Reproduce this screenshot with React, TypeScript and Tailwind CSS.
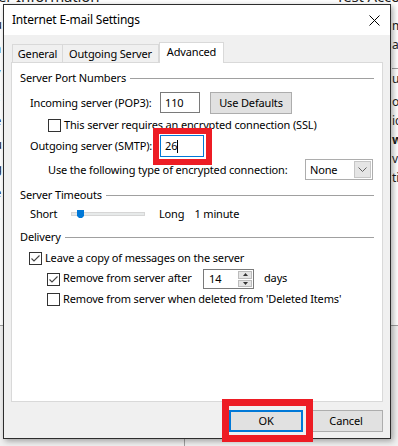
import React from "react";

const Checkbox = ({ checked = false }: { checked?: boolean }) => (
  <div className="w-[13px] h-[13px] shrink-0 border border-[#333333] bg-white flex items-center justify-center">
    {checked && (
      <svg width="11" height="11" viewBox="0 0 11 11">
        <polyline points="1.5,5.5 4,8 9.5,2.5" fill="none" stroke="#444444" strokeWidth="1.1" />
      </svg>
    )}
  </div>
);

const GroupLabel = ({ label }: { label: string }) => (
  <div className="flex items-center gap-[4px] h-[16px]">
    <span>{label}</span>
    <div className="flex-1 h-px bg-[#a0a0a0]" />
  </div>
);

const Button = ({ label, width }: { label: string; width: string }) => (
  <div className={`${width} h-[22px] bg-[#e1e1e1] border border-[#adadad] flex items-center justify-center`}>
    {label}
  </div>
);

export default function App() {
  return (
    <div className="relative w-[398px] h-[446px] overflow-hidden whitespace-nowrap bg-[#f0f0f0] text-[11px] leading-[16px] tracking-[-0.15px] text-black font-['Noto_Sans',sans-serif]">
      {/* window behind the dialog */}
      <div className="absolute inset-0 bg-white">
        <span className="absolute left-[-2px] top-[-12px] text-[15px] text-[#1e1e1e]">er Information</span>
        <span className="absolute left-[336px] top-[-12px] text-[15px] text-[#1e1e1e]">Test Account</span>
        <div className="absolute left-0 top-[16px] flex flex-col gap-[8px] text-[13px] text-[#1e1e1e]">
          <span className="ml-[-6px]">u</span>
          <span className="ml-[-6px]">a</span>
          <span className="ml-[-6px] text-[#2b4f9a]">v</span>
          <span className="ml-[-6px] text-[#2b4f9a]">c</span>
          <span className="ml-[-6px]">e</span>
          <span className="ml-[-6px]">u</span>
          <span className="ml-[-6px] underline">g</span>
          <span className="ml-[-6px]">e</span>
          <span className="ml-[-6px]">s</span>
        </div>
        <div className="absolute left-[392px] top-[18px] flex flex-col gap-[3px] text-[12px] text-[#1e1e1e]">
          <span>m</span>
          <span>a</span>
          <span className="mt-[12px] border-t border-[#a0a0a0] pt-[2px]">u</span>
          <span className="mt-[4px]">o</span>
          <span>ic</span>
          <span className="font-bold">w</span>
          <span>v</span>
          <span>ti</span>
        </div>
        <div className="absolute left-0 top-[325px] w-[398px] h-[121px] bg-[#f0f0f0] border-t border-[#a0a0a0]" />
        <div className="absolute left-[184px] top-[325px] w-px h-[121px] bg-[#a0a0a0]" />
      </div>

      {/* dialog */}
      <div className="relative z-10 ml-[3px] mt-[4px] w-[388px] h-[435px] border border-[#2d2d2d] bg-[#f0f0f0] flex flex-col shadow-[2px_2px_6px_rgba(0,0,0,0.35)]">
        <div className="h-[30px] bg-white flex items-center justify-between pl-[8px] pr-[10px]">
          <span className="text-[12px] tracking-[-0.2px]">Internet E-mail Settings</span>
          <svg width="11" height="11" viewBox="0 0 11 11">
            <path d="M0.5 0.5 L10.5 10.5 M10.5 0.5 L0.5 10.5" stroke="#000" strokeWidth="1" />
          </svg>
        </div>

        <div className="px-[7px] pt-[7px] flex flex-col">
          <div className="flex items-end h-[20px] pl-[1px]">
            <div className="w-[51px] h-[18px] border border-b-0 border-[#d9d9d9] flex items-center justify-center">General</div>
            <div className="w-[96px] h-[18px] border border-b-0 border-l-0 border-[#d9d9d9] flex items-center justify-center">Outgoing Server</div>
            <div className="relative z-10 -mb-px w-[65px] h-[21px] bg-white border border-b-0 border-[#d9d9d9] flex items-start justify-center pt-[1px]">Advanced</div>
          </div>

          <div className="h-[340px] bg-white border border-[#d9d9d9] pl-[8px] pr-[8px] flex flex-col">
            <div className="mt-[7px]">
              <GroupLabel label="Server Port Numbers" />
            </div>

            <div className="mt-[6px] h-[21px] flex items-center pl-[10px]">
              <span className="w-[130px]">Incoming server (POP3):</span>
              <div className="w-[40px] h-[21px] border border-[#7a7a7a] bg-white flex items-center pl-[4px]">110</div>
              <div className="ml-[10px]">
                <Button label="Use Defaults" width="w-[82px]" />
              </div>
            </div>

            <div className="mt-[4px] h-[16px] flex items-center gap-[3px] pl-[28px]">
              <Checkbox />
              <span>This server requires an encrypted connection (SSL)</span>
            </div>

            <div className="mt-[2px] h-[22px] flex items-center pl-[10px]">
              <span className="w-[130px]">Outgoing server (SMTP):</span>
              <div className="relative">
                <div className="w-[44px] h-[22px] border border-[#0078d7] bg-white flex items-center pl-[4px]">
                  26<span className="w-px h-[13px] bg-black" />
                </div>
                <div className="absolute -left-[7px] -top-[7px] -right-[8px] -bottom-[8px] border-[6px] border-[#ed1c24]" />
              </div>
            </div>

            <div className="mt-[2px] h-[21px] flex items-center pl-[28px]">
              <span className="w-[257px]">Use the following type of encrypted connection:</span>
              <div className="w-[68px] h-[21px] border border-[#adadad] bg-white flex items-center justify-between pl-[4px] pr-[1px]">
                <span>None</span>
                <div className="w-[17px] h-[17px] bg-[#e5e5e5] border border-[#c6c6c6] flex items-center justify-center">
                  <svg width="9" height="6" viewBox="0 0 9 6">
                    <polyline points="0.5,0.5 4.5,4.5 8.5,0.5" fill="none" stroke="#606060" strokeWidth="1" />
                  </svg>
                </div>
              </div>
            </div>

            <div className="mt-[7px]">
              <GroupLabel label="Server Timeouts" />
            </div>

            <div className="mt-[3px] h-[16px] flex items-center pl-[10px]">
              <span className="w-[41px]">Short</span>
              <div className="relative w-[74px] h-[4px] bg-[#e7eaea] border border-[#d6d6d6]">
                <svg className="absolute left-[5px] -top-[3px]" width="7" height="9" viewBox="0 0 7 9">
                  <path d="M0 0 H7 V6 L5 8 H2 L0 6 Z" fill="#0078d7" />
                </svg>
              </div>
              <span className="ml-[14px]">Long</span>
              <span className="ml-[10px]">1 minute</span>
            </div>

            <div className="mt-[7px]">
              <GroupLabel label="Delivery" />
            </div>

            <div className="mt-[5px] h-[16px] flex items-center gap-[3px] pl-[9px]">
              <Checkbox checked />
              <span>Leave a copy of messages on the server</span>
            </div>

            <div className="mt-[3px] h-[20px] flex items-center pl-[27px]">
              <Checkbox checked />
              <span className="ml-[3px] w-[140px] -mt-[3px]">Remove from server after</span>
              <div className="w-[51px] h-[20px] border border-[#7a7a7a] bg-white flex items-center justify-between pl-[5px] pr-[1px]">
                <span>14</span>
                <div className="w-[14px] h-[16px] flex flex-col gap-px">
                  <div className="flex-1 bg-[#e5e5e5] border border-[#bcbcbc] flex items-center justify-center">
                    <svg width="5" height="3" viewBox="0 0 5 3"><path d="M0 3 L2.5 0 L5 3 Z" fill="#333" /></svg>
                  </div>
                  <div className="flex-1 bg-[#e5e5e5] border border-[#bcbcbc] flex items-center justify-center">
                    <svg width="5" height="3" viewBox="0 0 5 3"><path d="M0 0 L2.5 3 L5 0 Z" fill="#333" /></svg>
                  </div>
                </div>
              </div>
              <span className="ml-[10px] -mt-[3px]">days</span>
            </div>

            <div className="mt-[2px] h-[16px] flex items-center gap-[3px] pl-[27px]">
              <Checkbox />
              <span>Remove from server when deleted from 'Deleted Items'</span>
            </div>
          </div>

          <div className="mt-[8px] flex justify-end gap-[6px]">
            <div className="relative">
              <div className="w-[74px] h-[22px] bg-[#e1e1e1] border-2 border-[#0078d7] flex items-center justify-center">OK</div>
              <div className="absolute -left-[7px] -top-[11px] -right-[10px] -bottom-[10px] border-[7px] border-[#ed1c24]" />
            </div>
            <Button label="Cancel" width="w-[74px]" />
          </div>
        </div>
      </div>
    </div>
  );
}
